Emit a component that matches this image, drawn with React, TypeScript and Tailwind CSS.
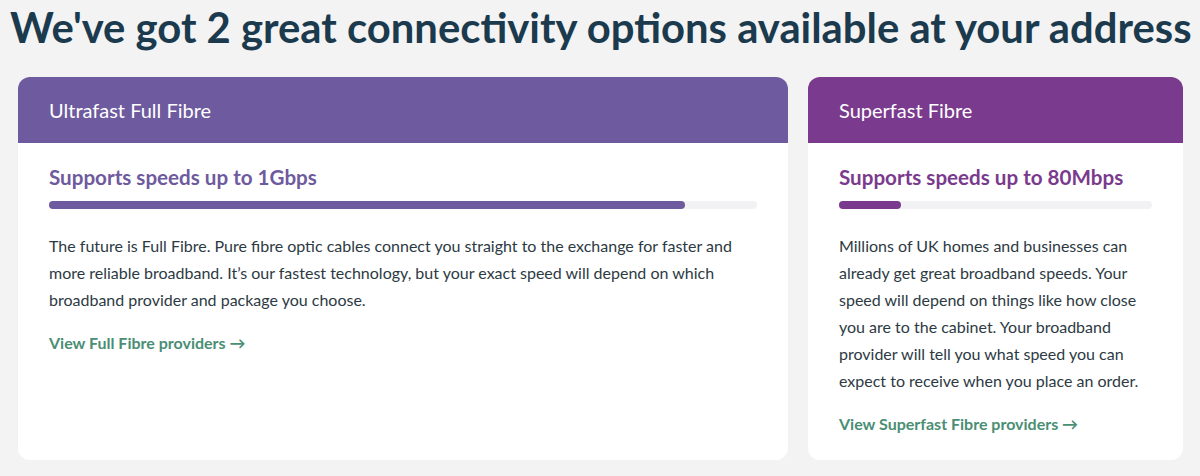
import React from "react";

const font = { fontFamily: "Lato, 'Noto Sans', sans-serif" };

function Card({
  title,
  header,
  accent,
  speed,
  fill,
  lines,
  link,
  className,
}: {
  title: string;
  header: string;
  accent: string;
  speed: string;
  fill: number;
  lines: string[];
  link: string;
  className: string;
}) {
  return (
    <div className={`flex flex-col rounded-xl bg-white overflow-hidden ${className}`}>
      <div className={`h-[66px] flex items-center pl-[31px] text-white text-[20px] ${header}`}>
        {title}
      </div>
      <div className="px-[31px] pt-[19px]">
        <div className={`text-[20.6px] font-bold leading-[30px] whitespace-nowrap ${accent}`}>{speed}</div>
        <div className="mt-[9px] h-[8px] rounded-full bg-[#f2f2f4]">
          <div className={`h-full rounded-full ${header}`} style={{ width: `${fill}%` }} />
        </div>
        <p className="mt-[23px] text-[16px] leading-[27px] text-[#2d3a43] whitespace-nowrap">
          {lines.map((l, i) => (
            <React.Fragment key={i}>
              {l}
              {i < lines.length - 1 && <br />}
            </React.Fragment>
          ))}
        </p>
        <div className="mt-[16px] text-[16px] font-bold leading-[27px] text-[#4a8e74] whitespace-nowrap">{link}</div>
      </div>
    </div>
  );
}

export default function App() {
  return (
    <div className="w-[1200px] h-[476px] bg-[#f3f3f3] overflow-hidden" style={font}>
      <h1 className="pl-[10px] pt-[2px] text-[41.8px] leading-[50px] font-bold text-[#1b3a4e] whitespace-nowrap">
        We've got 2 great connectivity options available at your address
      </h1>
      <div className="flex gap-[20px] pl-[18px] pt-[25px]">
        <Card
          className="w-[770px] h-[383px]"
          title="Ultrafast Full Fibre"
          header="bg-[#6e5a9e]"
          accent="text-[#6e5a9e]"
          speed="Supports speeds up to 1Gbps"
          fill={89.9}
          lines={[
            "The future is Full Fibre. Pure fibre optic cables connect you straight to the exchange for faster and",
            "more reliable broadband. It’s our fastest technology, but your exact speed will depend on which",
            "broadband provider and package you choose.",
          ]}
          link="View Full Fibre providers →"
        />
        <Card
          className="w-[375px] h-[383px]"
          title="Superfast Fibre"
          header="bg-[#7a3a8d]"
          accent="text-[#7a3a8d]"
          speed="Supports speeds up to 80Mbps"
          fill={19.8}
          lines={[
            "Millions of UK homes and businesses can",
            "already get great broadband speeds. Your",
            "speed will depend on things like how close",
            "you are to the cabinet. Your broadband",
            "provider will tell you what speed you can",
            "expect to receive when you place an order.",
          ]}
          link="View Superfast Fibre providers →"
        />
      </div>
    </div>
  );
}
